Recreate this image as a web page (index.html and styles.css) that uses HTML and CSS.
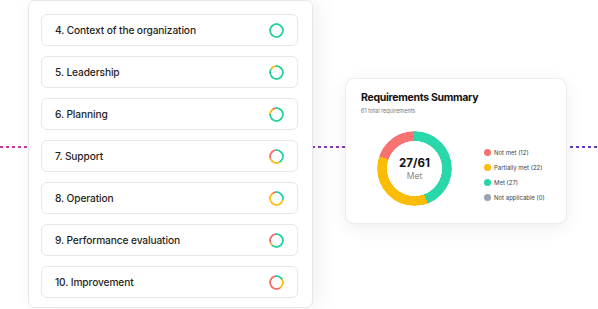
FILE: index.html
```html
<!DOCTYPE html>
<html lang="en">
<head>
  <meta charset="UTF-8">
  <title>Clauses and requirements</title>
  <meta name="viewport" content="width=device-width, initial-scale=1">
  <link rel="stylesheet" href="styles.css">
</head>
<body>

  <div class="stage">
    <!-- clause list -->
    <div class="clause-panel">
      <div class="clause-row">
        <span>4. Context of the organization</span>
        <i class="mini-ring" style="--g: 360deg; --y: 360deg"></i>
      </div>
      <div class="clause-row">
        <span>5. Leadership</span>
        <i class="mini-ring" style="--g: 300deg; --y: 360deg"></i>
      </div>
      <div class="clause-row">
        <span>6. Planning</span>
        <i class="mini-ring" style="--g: 275deg; --y: 325deg"></i>
      </div>
      <div class="clause-row">
        <span>7. Support</span>
        <i class="mini-ring" style="--g: 150deg; --y: 250deg"></i>
      </div>
      <div class="clause-row">
        <span>8. Operation</span>
        <i class="mini-ring" style="--g: 105deg; --y: 325deg"></i>
      </div>
      <div class="clause-row">
        <span>9. Performance evaluation</span>
        <i class="mini-ring" style="--g: 220deg; --y: 245deg"></i>
      </div>
      <div class="clause-row">
        <span>10. Improvement</span>
        <i class="mini-ring" style="--g: 60deg; --y: 150deg"></i>
      </div>
    </div>

    <!-- summary card -->
    <div class="summary-card">
      <h3>Requirements Summary</h3>
      <p class="sub">61 total requirements</p>

      <div class="summary-body">
        <div class="donut" style="--g: 159.3deg; --y: 289.2deg">
          <strong>27/61</strong>
          <small>Met</small>
        </div>

        <ul class="legend">
          <li><b class="dot red"></b>Not met (12)</li>
          <li><b class="dot yellow"></b>Partially met (22)</li>
          <li><b class="dot green"></b>Met (27)</li>
          <li><b class="dot gray"></b>Not applicable (0)</li>
        </ul>
      </div>
    </div>
  </div>

</body>
</html>
```

FILE: styles.css
```css
* {
  box-sizing: border-box;
}

body {
  margin: 0;
  background: #fff;
  font-family: 'Inter', 'Liberation Sans', sans-serif;
  color: #1f1f24;
}

.stage {
  position: relative;
  height: 309px;
  display: flex;
  align-items: flex-start;
  overflow: hidden;
}

/* dashed connector behind the cards */
.stage::before {
  content: "";
  position: absolute;
  left: 0;
  right: 0;
  top: 146px;
  height: 1.5px;
  background:
    repeating-linear-gradient(90deg, transparent 0 3px, #fff 3px 6px),
    linear-gradient(90deg, #c4379c, #5a3bc6);
}

.clause-panel {
  position: relative;
  z-index: 1;
  width: 285px;
  height: 308px;
  margin-left: 28px;
  padding: 13px 14px 0 12px;
  background: #fff;
  border: 1px solid #e6e6ec;
  border-radius: 7px;
  box-shadow: 6px 0 22px rgba(20, 20, 40, 0.06);
  display: flex;
  flex-direction: column;
  gap: 10px;
}

.clause-row {
  height: 32px;
  display: flex;
  align-items: center;
  justify-content: space-between;
  padding: 0 13px 0 13px;
  border: 1px solid #e6e6ee;
  border-radius: 6px;
  font-size: 10.2px;
  font-weight: 500;
  letter-spacing: -0.12px;
}

.mini-ring {
  width: 15px;
  height: 15px;
  border-radius: 50%;
  background: conic-gradient(#22d3a0 0 var(--g), #fbbd12 var(--g) var(--y), #f76d6d var(--y) 360deg);
  -webkit-mask: radial-gradient(circle, transparent 5.2px, #000 5.7px);
  mask: radial-gradient(circle, transparent 5.2px, #000 5.7px);
}

.summary-card {
  position: relative;
  z-index: 1;
  width: 222px;
  height: 146px;
  margin: 78px 0 0 32px;
  padding: 12px 15px;
  background: #fff;
  border: 1px solid #ececf0;
  border-radius: 9px;
  box-shadow: 0 4px 18px rgba(20, 20, 40, 0.07);
}

.summary-card h3 {
  margin: 0;
  font-size: 10.5px;
  line-height: 14px;
  font-weight: 700;
  letter-spacing: -0.3px;
  color: #111;
}

.sub {
  margin: 2px 0 0;
  font-size: 5.5px;
  line-height: 9px;
  color: #777;
}

.summary-body {
  display: flex;
  align-items: flex-start;
  margin-top: 15px;
}

.donut {
  position: relative;
  width: 75px;
  height: 75px;
  margin-left: 16px;
  display: flex;
  flex-direction: column;
  align-items: center;
  justify-content: center;
}

.donut::before {
  content: "";
  position: absolute;
  inset: 0;
  border-radius: 50%;
  background: conic-gradient(#2ad7a8 0 var(--g), #fbbc05 var(--g) var(--y), #f87272 var(--y) 360deg);
  -webkit-mask: radial-gradient(circle, transparent 27.3px, #000 27.8px);
  mask: radial-gradient(circle, transparent 27.3px, #000 27.8px);
}

.donut strong {
  font-size: 11.5px;
  line-height: 14px;
  font-weight: 700;
  color: #111;
}

.donut small {
  margin-top: 1px;
  font-size: 8.5px;
  line-height: 11px;
  color: #888;
}

.legend {
  list-style: none;
  margin: 17px 0 0 32px;
  padding: 0;
  display: flex;
  flex-direction: column;
  gap: 6px;
}

.legend li {
  display: flex;
  align-items: center;
  gap: 3px;
  height: 9px;
  font-size: 6px;
  color: #444;
}

.dot {
  width: 7px;
  height: 7px;
  border-radius: 50%;
}

.dot.red { background: #f87171; }
.dot.yellow { background: #fbbc0a; }
.dot.green { background: #2bd6a6; }
.dot.gray { background: #9ba3b2; }
```
